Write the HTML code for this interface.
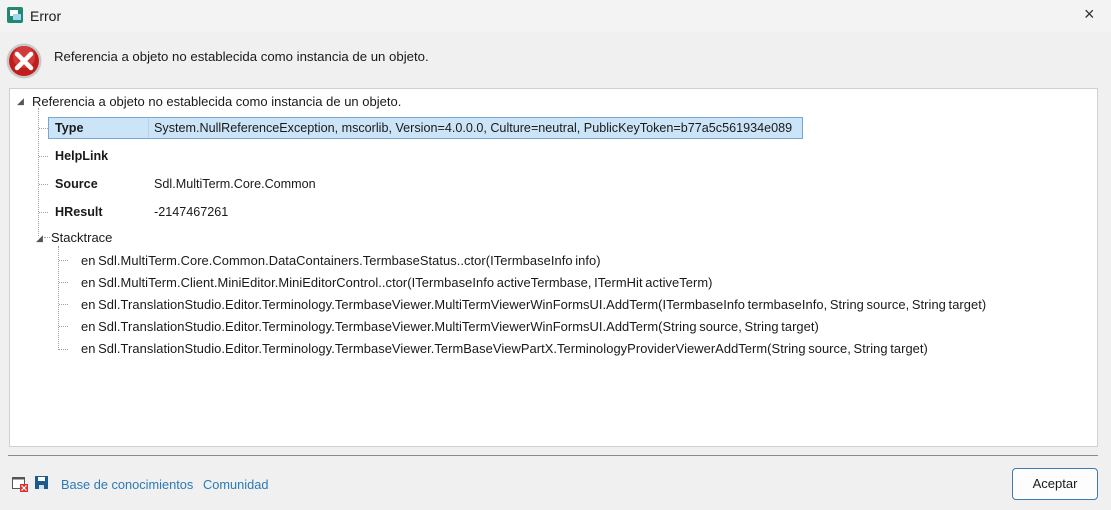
<!DOCTYPE html>
<html><head><style>
*{margin:0;padding:0;box-sizing:border-box}
body{width:1111px;height:510px;background:#f0f0f0;font-family:"Liberation Sans",sans-serif;font-size:12.6px;color:#1a1a1a;position:relative;overflow:hidden}
.a{position:absolute;white-space:nowrap}
.title{left:0;top:0;width:1111px;height:32px;background:#f3f3f3}
.tree{left:9px;top:88px;width:1089px;height:359px;background:#fff;border:1px solid #d0d0d0}
.b{font-weight:bold}
.dv{position:absolute;border-left:1px dotted #a0a0a0}
.dh{position:absolute;border-top:1px dotted #a0a0a0}
.st{font-size:12.9px;letter-spacing:0.06px;word-spacing:-1px}
</style></head><body>
<div class="a title"></div>
<svg class="a" style="left:7px;top:7px" width="16" height="16"><rect x="0" y="0" width="16" height="16" rx="2" fill="#1f8a70"/><rect x="3" y="3" width="8" height="6" fill="#fff"/><rect x="6" y="7" width="8" height="6" fill="#9fd8f0"/></svg>
<div class="a" style="left:30px;top:8px;font-size:14px">Error</div>
<div class="a" style="left:1084px;top:4px;font-size:18px;color:#333">×</div>
<svg class="a" style="left:5px;top:42px" width="38" height="38"><circle cx="19" cy="19" r="17.5" fill="#c8c8c8"/><circle cx="19" cy="19" r="15" fill="#c21d1d"/><circle cx="19" cy="15" r="11" fill="#e05a5a" opacity=".5"/><path d="M12 12 L26 26 M26 12 L12 26" stroke="#fff" stroke-width="4.5" stroke-linecap="round"/></svg>
<div class="a" style="left:54px;top:49px;font-size:13.2px">Referencia a objeto no establecida como instancia de un objeto.</div>
<div class="a tree"></div>
<div class="a" style="left:17px;top:96px;font-size:9px;color:#555">◢</div>
<div class="a" style="left:32px;top:94px;font-size:13px">Referencia a objeto no establecida como instancia de un objeto.</div>
<div class="dv" style="left:38px;top:108px;height:128px"></div>
<div class="dh" style="left:39px;top:128px;width:9px"></div>
<div class="dh" style="left:39px;top:156px;width:9px"></div>
<div class="dh" style="left:39px;top:184px;width:9px"></div>
<div class="dh" style="left:39px;top:212px;width:9px"></div>
<div class="a" style="left:48px;top:117px;width:755px;height:22px;background:#cce4f7;border:1px solid #7aa7d0"></div>
<div class="dv" style="left:148px;top:118px;height:20px;border-left:1px solid #b8d4ec"></div>
<div class="a b" style="left:55px;top:121px">Type</div>
<div class="a" style="left:154px;top:121px">System.NullReferenceException, mscorlib, Version=4.0.0.0, Culture=neutral, PublicKeyToken=b77a5c561934e089</div>
<div class="a b" style="left:55px;top:149px">HelpLink</div>
<div class="a b" style="left:55px;top:177px">Source</div>
<div class="a" style="left:154px;top:177px">Sdl.MultiTerm.Core.Common</div>
<div class="a b" style="left:55px;top:205px">HResult</div>
<div class="a" style="left:154px;top:205px">-2147467261</div>
<div class="a" style="left:36px;top:233px;font-size:9px;color:#555">◢</div>
<div class="dh" style="left:44px;top:237px;width:6px"></div>
<div class="a" style="left:51px;top:230px;font-size:13px">Stacktrace</div>
<div class="dv" style="left:58px;top:246px;height:104px"></div>
<div class="dh" style="left:59px;top:260px;width:9px"></div>
<div class="dh" style="left:59px;top:282px;width:9px"></div>
<div class="dh" style="left:59px;top:304px;width:9px"></div>
<div class="dh" style="left:59px;top:326px;width:9px"></div>
<div class="dh" style="left:59px;top:349px;width:9px"></div>
<div class="a st" style="left:81px;top:253px">en Sdl.MultiTerm.Core.Common.DataContainers.TermbaseStatus..ctor(ITermbaseInfo info)</div>
<div class="a st" style="left:81px;top:275px">en Sdl.MultiTerm.Client.MiniEditor.MiniEditorControl..ctor(ITermbaseInfo activeTermbase, ITermHit activeTerm)</div>
<div class="a st" style="left:81px;top:297px">en Sdl.TranslationStudio.Editor.Terminology.TermbaseViewer.MultiTermViewerWinFormsUI.AddTerm(ITermbaseInfo termbaseInfo, String source, String target)</div>
<div class="a st" style="left:81px;top:319px">en Sdl.TranslationStudio.Editor.Terminology.TermbaseViewer.MultiTermViewerWinFormsUI.AddTerm(String source, String target)</div>
<div class="a st" style="left:81px;top:341px">en Sdl.TranslationStudio.Editor.Terminology.TermbaseViewer.TermBaseViewPartX.TerminologyProviderViewerAddTerm(String source, String target)</div>
<div class="a" style="left:8px;top:455px;width:1090px;height:1px;background:#8a8a8a"></div>
<svg class="a" style="left:12px;top:477px" width="16" height="15"><rect x="0.5" y="0.5" width="12" height="11" fill="#fff" stroke="#555"/><rect x="0.5" y="0.5" width="12" height="2" fill="#555"/><rect x="8" y="7" width="8" height="8" fill="#d33"/><path d="M9.5 8.5l5 5M14.5 8.5l-5 5" stroke="#fff" stroke-width="1.2"/></svg>
<svg class="a" style="left:35px;top:476px" width="14" height="14"><rect x="0" y="0" width="13" height="13" fill="#1e5b8a"/><rect x="3" y="1" width="7" height="4" fill="#fff"/><rect x="4" y="9" width="5" height="4" fill="#cfe0ee"/></svg>
<div class="a" style="left:61px;top:477px;color:#2a7ab8;font-size:12.8px">Base de conocimientos</div>
<div class="a" style="left:203px;top:477px;color:#2a7ab8;font-size:12.8px">Comunidad</div>
<div class="a" style="left:1012px;top:468px;width:86px;height:32px;background:#fdfdfd;border:1px solid #3f7ab0;border-radius:4px;text-align:center;line-height:30px;font-size:13px">Aceptar</div>
</body></html>
